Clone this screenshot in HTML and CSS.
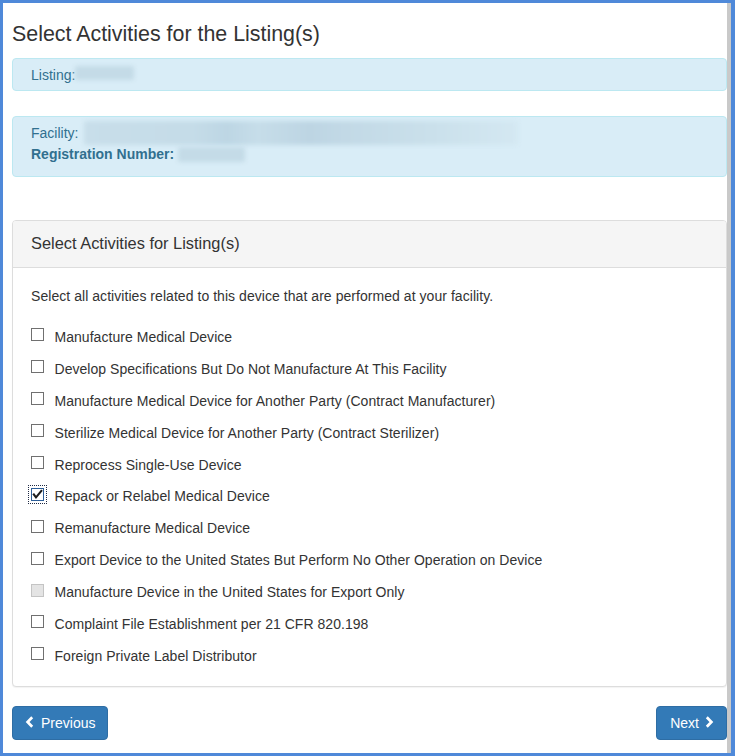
FILE: index.html
```html
<!DOCTYPE html>
<html lang="en">
<head>
<meta charset="utf-8">
<title>Select Activities for the Listing(s)</title>
<link rel="stylesheet" href="styles.css">
</head>
<body>
<div class="frame">
  <div class="page">
    <h1 class="title">Select Activities for the Listing(s)</h1>

    <div class="alert alert-listing">Listing:<span class="redact redact-listing"></span></div>

    <div class="alert alert-facility">
      <div class="alert-line">Facility: <span class="redact redact-facility"></span></div>
      <div class="alert-line"><strong>Registration Number:</strong> <span class="redact redact-reg"></span></div>
    </div>

    <section class="panel">
      <div class="panel-heading">Select Activities for Listing(s)</div>
      <div class="panel-body">
        <p class="intro">Select all activities related to this device that are performed at your facility.</p>
        <ul class="checks">
          <li class="check"><span class="box"></span><span class="check-label">Manufacture Medical Device</span></li>
          <li class="check"><span class="box"></span><span class="check-label">Develop Specifications But Do Not Manufacture At This Facility</span></li>
          <li class="check"><span class="box"></span><span class="check-label">Manufacture Medical Device for Another Party (Contract Manufacturer)</span></li>
          <li class="check"><span class="box"></span><span class="check-label">Sterilize Medical Device for Another Party (Contract Sterilizer)</span></li>
          <li class="check"><span class="box"></span><span class="check-label">Reprocess Single-Use Device</span></li>
          <li class="check"><span class="box box-checked"><svg class="tick" viewBox="0 0 11 11" width="11" height="11" aria-hidden="true"><polyline points="1.2,4.6 4,8.4 10,1.2" fill="none" stroke="#1b1b1b" stroke-width="2.1" stroke-linejoin="miter" stroke-linecap="butt"/></svg></span><span class="check-label">Repack or Relabel Medical Device</span></li>
          <li class="check"><span class="box"></span><span class="check-label">Remanufacture Medical Device</span></li>
          <li class="check"><span class="box"></span><span class="check-label">Export Device to the United States But Perform No Other Operation on Device</span></li>
          <li class="check"><span class="box box-disabled"></span><span class="check-label">Manufacture Device in the United States for Export Only</span></li>
          <li class="check"><span class="box"></span><span class="check-label">Complaint File Establishment per 21 CFR 820.198</span></li>
          <li class="check"><span class="box"></span><span class="check-label">Foreign Private Label Distributor</span></li>
        </ul>
      </div>
    </section>

    <div class="actions">
      <button class="btn btn-prev" type="button"><svg class="chev" viewBox="0 0 9 12" width="9" height="12" aria-hidden="true"><polyline points="7.2,1.3 2.6,6 7.2,10.7" fill="none" stroke="#fff" stroke-width="2.7" stroke-linejoin="miter"/></svg><span>Previous</span></button>
      <button class="btn btn-next" type="button"><span>Next</span><svg class="chev" viewBox="0 0 9 12" width="9" height="12" aria-hidden="true"><polyline points="1.8,1.3 6.4,6 1.8,10.7" fill="none" stroke="#fff" stroke-width="2.7" stroke-linejoin="miter"/></svg></button>
    </div>
  </div>
</div>
</body>
</html>
```

FILE: styles.css
```css
* { box-sizing: border-box; }

html, body {
  margin: 0;
  padding: 0;
  background: #fff;
}

body {
  font-family: "Liberation Sans", Arial, Helvetica, sans-serif;
  font-size: 14px;
  line-height: 20px;
  color: #333;
}

.frame {
  width: 735px;
  height: 756px;
  border: 3px solid #4f89d9;
  border-right-width: 4px;
  background: #fff;
}

.page {
  height: 100%;
  border-right: 4px solid #c9c9c9;
  padding-left: 9px;
  display: flex;
  flex-direction: column;
}

.title {
  margin: 18.5px 0 12.5px;
  font-size: 21.4px;
  line-height: 24px;
  font-weight: normal;
  color: #333;
}

.alert {
  background: #d9edf7;
  border: 1px solid #bce8f1;
  border-radius: 4px;
  color: #31708f;
  padding-left: 18px;
  padding-right: 18px;
}

.alert-listing {
  padding-top: 6px;
  padding-bottom: 5px;
  margin-bottom: 25px;
}

.alert-facility {
  padding-top: 6px;
  padding-bottom: 11px;
  margin-bottom: 43px;
  line-height: 21px;
}

.alert-line strong { font-weight: bold; }

.redact {
  display: inline-block;
  vertical-align: baseline;
  filter: blur(2px);
  border-radius: 2px;
}

.redact-listing {
  width: 59px;
  height: 14px;
  background: #c4dbe7;
}

.redact-facility {
  width: 434px;
  height: 24px;
  margin-left: 2px;
  margin-top: -6px;
  margin-bottom: -7px;
  background: linear-gradient(to right,
    #c8deea 0%, #c5dce8 25%, #bdd6e4 33%, #c6dde9 40%,
    #bdd5e3 52%, #c2d9e6 60%, #cae0eb 80%, #d4e8f2 100%);
}

.redact-reg {
  width: 67px;
  height: 15px;
  margin-left: 0;
  margin-bottom: -3px;
  background: #c4dbe7;
}

.panel {
  border: 1px solid #ddd;
  border-radius: 4px;
  background: #fff;
  box-shadow: 0 1px 1px rgba(0, 0, 0, 0.05);
}

.panel-heading {
  background: #f5f5f5;
  border-bottom: 1px solid #ddd;
  border-radius: 3px 3px 0 0;
  padding: 12px 18px 14px;
  font-size: 16.4px;
  line-height: 20px;
  color: #333;
}

.panel-body {
  padding: 18px 18px 20px;
}

.intro {
  margin: 0 0 21px;
  letter-spacing: 0.05px;
}

.checks {
  list-style: none;
  margin: 0;
  padding: 0;
  display: flex;
  flex-direction: column;
  gap: 11.9px;
}

.check {
  display: flex;
  align-items: flex-start;
  height: 20px;
}

.box {
  flex: none;
  width: 13px;
  height: 13px;
  margin-top: 1.4px;
  border: 1px solid #707070;
  background: #fff;
  display: flex;
  align-items: center;
  justify-content: center;
}

.box-checked {
  border-color: #2d5e98;
  outline: 1px dotted #1f2a44;
  outline-offset: 2px;
}

.tick { display: block; }

.box-disabled {
  background: #e4e4e4;
  border-color: #c4c4c4;
}

.check-label {
  margin-left: 10.5px;
  letter-spacing: 0.04px;
}

.actions {
  display: flex;
  justify-content: space-between;
  margin-top: 19px;
}

.btn {
  display: inline-flex;
  align-items: center;
  height: 34px;
  padding: 6px 12px;
  border: 1px solid #2e6da4;
  border-radius: 4px;
  background: #337ab7;
  color: #fff;
  font-family: inherit;
  font-size: 14px;
  line-height: 20px;
  cursor: pointer;
}

.btn-prev { gap: 7px; }
.btn-next { gap: 6px; padding-left: 13px; }

.chev {
  display: block;
  margin-top: -2px;
}
```
